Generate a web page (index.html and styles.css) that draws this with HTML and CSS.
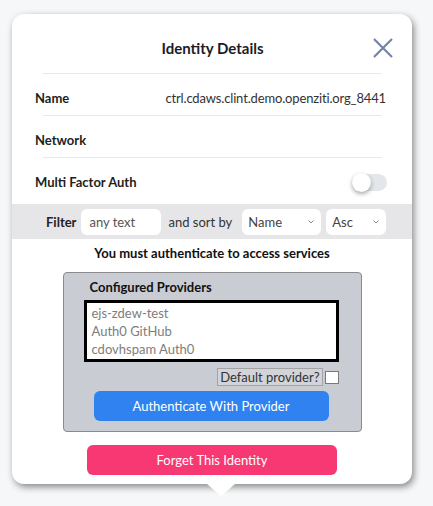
FILE: index.html
```html
<!DOCTYPE html>
<html lang="en">
<head>
<meta charset="utf-8">
<title>Identity Details</title>
<link rel="stylesheet" href="styles.css">
</head>
<body>
<div class="card">
  <div class="header">
    <span></span>
    <h1 class="title">Identity Details</h1>
    <button class="close" aria-label="Close">
      <svg width="20" height="20" viewBox="0 0 20 20"><path d="M1 1 L19 19 M19 1 L1 19" stroke="#7285a8" stroke-width="2.2" fill="none"/></svg>
    </button>
  </div>
  <div class="sep"></div>
  <div class="row">
    <span class="label">Name</span>
    <span class="value value-name">ctrl.cdaws.clint.demo.openziti.org_8441</span>
  </div>
  <div class="sep"></div>
  <div class="row">
    <span class="label">Network</span>
    <span class="value"></span>
  </div>
  <div class="sep"></div>
  <div class="row row-mfa">
    <span class="label">Multi Factor Auth</span>
    <span class="toggle"><span class="knob"></span></span>
  </div>
  <div class="filter-bar">
    <span class="filter-label">Filter</span>
    <span class="input">any text</span>
    <span class="sort-label">and sort by</span>
    <span class="select select-name">Name<svg width="6" height="4" viewBox="0 0 6 4"><path d="M0.5 0.5 L3 3 L5.5 0.5" stroke="#8a8a8a" stroke-width="1" fill="none"/></svg></span>
    <span class="select select-dir">Asc<svg width="6" height="4" viewBox="0 0 6 4"><path d="M0.5 0.5 L3 3 L5.5 0.5" stroke="#8a8a8a" stroke-width="1" fill="none"/></svg></span>
  </div>
  <p class="notice">You must authenticate to access services</p>
  <div class="providers">
    <div class="providers-title">Configured Providers</div>
    <ul class="provider-list">
      <li>ejs-zdew-test</li>
      <li>Auth0 GitHub</li>
      <li>cdovhspam Auth0</li>
    </ul>
    <div class="default-row">
      <span class="default-label">Default provider?</span>
      <span class="checkbox"></span>
    </div>
    <button class="btn btn-auth">Authenticate With Provider</button>
  </div>
  <button class="btn btn-forget">Forget This Identity</button>
</div>
</body>
</html>
```

FILE: styles.css
```css
* { box-sizing: border-box; }
html, body { margin: 0; padding: 0; }
body {
  background: #f6f7f9;
  font-family: "Lato", "Noto Sans", sans-serif;
  font-size: 13px;
  color: #222;
  width: 433px;
  height: 506px;
  overflow: hidden;
}
.card {
  position: relative;
  margin: 14px 0 0 12px;
  width: 400px;
  background: #fff;
  border-radius: 12px;
  box-shadow: 2px 3px 7px rgba(0,0,0,0.45);
  padding-bottom: 9px;
}
.card::after {
  content: "";
  position: absolute;
  left: 195px;
  bottom: -12px;
  border-left: 14px solid transparent;
  border-right: 14px solid transparent;
  border-top: 12px solid #fff;
}
.header {
  display: grid;
  grid-template-columns: 1fr auto 1fr;
  align-items: center;
  padding: 24px 30px 15px 31px;
}
.title {
  margin: 0;
  font-size: 15px;
  font-weight: 700;
  line-height: 20px;
  color: #1b1b2b;
}
.close {
  justify-self: end;
  margin-right: -11px;
  padding: 0;
  border: 0;
  background: none;
  width: 20px;
  height: 20px;
  display: flex;
}
.sep {
  height: 1px;
  background: #e9e9eb;
  margin: 0 30px 0 31px;
}
.row {
  display: flex;
  justify-content: space-between;
  align-items: center;
  padding: 15px 26px 8px 23px;
  line-height: 18px;
}
.label { font-weight: 700; color: #1e1e1e; }
.value { color: #333; }
.value-name { letter-spacing: -0.15px; }
.row-mfa { padding-bottom: 13px; }
.toggle {
  position: relative;
  width: 35px;
  height: 17px;
  border-radius: 9px;
  background: #e3e7eb;
  margin-right: -1px;
}
.knob {
  position: absolute;
  left: 0;
  top: -1px;
  width: 19px;
  height: 19px;
  border-radius: 50%;
  background: #fff;
  box-shadow: 0 2px 4px rgba(0,0,0,0.35);
}
.filter-bar {
  display: flex;
  align-items: center;
  height: 35px;
  padding: 5px 0 4px 34px;
  background: #e6e6e8;
}
.filter-label { font-weight: 700; margin-right: 5px; }
.input, .select {
  height: 26px;
  background: #fff;
  border-radius: 6px;
  display: flex;
  align-items: center;
  color: #444;
}
.input { width: 80px; padding-left: 8px; color: #555; }
.sort-label { margin: 0 10px 0 7px; color: #333; }
.select { justify-content: space-between; padding: 0 7px 0 6px; }
.select-name { width: 79px; margin-right: 5px; }
.select-dir { width: 60px; }
.notice {
  margin: 5px 0 10px;
  text-align: center;
  font-weight: 700;
  line-height: 18px;
  color: #111;
}
.providers {
  width: 299px;
  margin: 0 auto;
  background: #c9ccd3;
  border: 1px solid #8b8b8e;
  border-radius: 4px;
  padding: 5px 0 10px 20px;
}
.providers-title {
  font-weight: 700;
  line-height: 18px;
  padding-left: 6px;
  margin-bottom: 4px;
  color: #111;
}
.provider-list {
  list-style: none;
  margin: 0;
  width: 255px;
  height: 62px;
  background: #fff;
  border: 3px solid #000;
  padding: 1px 5px;
  color: #7d7d7d;
  line-height: 18px;
}
.default-row {
  width: 255px;
  display: flex;
  justify-content: flex-end;
  align-items: center;
  margin-top: 6px;
  gap: 2px;
}
.default-label {
  border: 1px solid #a3a3a5;
  background: #d2d4d9;
  line-height: 16px;
  padding: 0 2px;
  color: #333;
}
.checkbox {
  width: 14px;
  height: 13px;
  background: #fff;
  border: 1px solid #7a7a7a;
}
.btn {
  display: block;
  border: 0;
  color: #fff;
  font-family: inherit;
  font-size: 13px;
  border-radius: 6px;
  padding: 0;
}
.btn-auth {
  width: 235px;
  height: 30px;
  margin: 5px 0 0 10px;
  background: #2f82f0;
}
.btn-forget {
  width: 250px;
  height: 30px;
  margin: 13px auto 0;
  background: #f83872;
}
```
